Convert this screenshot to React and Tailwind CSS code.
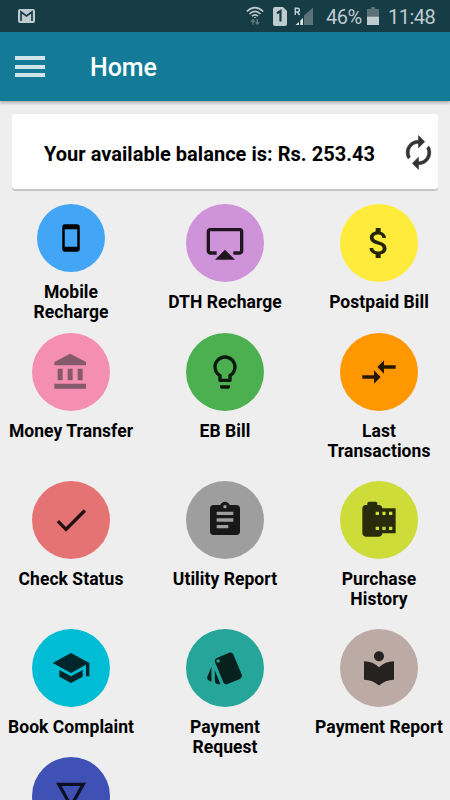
import {
  MdStayPrimaryPortrait,
  MdAirplay,
  MdAttachMoney,
  MdCompareArrows,
  MdCheck,
  MdAssignment,
  MdCameraRoll,
  MdSchool,
  MdLocalLibrary,
} from "react-icons/md";

function BankIcon({ className }) {
  return (
    <svg className={className} viewBox="0 0 24 24" fill="currentColor">
      <path d="M4 10v7h3v-7H4zm6 0v7h3v-7h-3zM2 22h19v-3H2v3zm14-12v7h3v-7h-3zm-4.5-9L2 6v2h19V6l-9.5-5z" />
    </svg>
  );
}

function BulbIcon({ className }) {
  return (
    <svg className={className} viewBox="0 0 24 24" fill="currentColor">
      <path d="M9 21c0 .55.45 1 1 1h4c.55 0 1-.45 1-1v-1H9v1zm3-19C8.14 2 5 5.14 5 9c0 2.38 1.19 4.47 3 5.74V17c0 .55.45 1 1 1h6c.55 0 1-.45 1-1v-2.26c1.81-1.27 3-3.36 3-5.74 0-3.86-3.14-7-7-7zm2.85 11.1l-.85.6V16h-4v-2.3l-.85-.6C7.8 12.16 7 10.63 7 9c0-2.76 2.24-5 5-5s5 2.24 5 5c0 1.63-.8 3.16-2.15 4.1z" />
    </svg>
  );
}

function CardsIcon({ className }) {
  return (
    <svg className={className} viewBox="0 0 24 24" fill="currentColor">
      <path d="M2.53 19.65l1.34.56v-9.03l-2.43 5.86c-.41 1.02.08 2.19 1.09 2.61zm19.5-3.7L17.07 3.98c-.31-.75-1.04-1.21-1.81-1.23-.26 0-.53.04-.79.15L7.1 5.95c-.75.31-1.21 1.03-1.23 1.8-.01.27.04.54.15.8l4.96 11.97c.31.76 1.05 1.22 1.83 1.23.26 0 .52-.05.77-.15l7.36-3.05c1.02-.42 1.51-1.59 1.09-2.6zM7.88 8.75c-.55 0-1-.45-1-1s.45-1 1-1 1 .45 1 1-.45 1-1 1zm-2 11c0 1.1.9 2 2 2h1.45l-3.45-8.34v6.34z" />
    </svg>
  );
}

function TriangleIcon({ className }) {
  return (
    <svg className={className} viewBox="0 0 24 24" fill="currentColor">
      <path d="M3 4l9 16 9-16H3zm3.38 2h11.25L12 16 6.38 6z" />
    </svg>
  );
}

function RefreshIcon({ className }) {
  return (
    <svg className={className} viewBox="0 0 24 24" fill="currentColor" stroke="currentColor" strokeWidth="0.35">
      <path d="M12 6v3l4-4-4-4v3c-4.42 0-8 3.58-8 8 0 1.57.46 3.03 1.24 4.26L6.7 14.8c-.45-.83-.7-1.79-.7-2.8 0-3.31 2.69-6 6-6zm6.76 1.74L17.3 9.2c.44.84.7 1.79.7 2.8 0 3.31-2.69 6-6 6v-3l-4 4 4 4v-3c4.42 0 8-3.58 8-8 0-1.57-.46-3.03-1.24-4.26z" />
    </svg>
  );
}

const services = [
  { label: ["Mobile", "Recharge"], Icon: MdStayPrimaryPortrait, circle: "size-[68px] bg-[#42a5f5]", icon: "size-[30px] text-black" },
  { label: ["DTH Recharge"], Icon: MdAirplay, circle: "size-[78px] bg-[#ce93d8]", icon: "size-[40px] text-black/85" },
  { label: ["Postpaid Bill"], Icon: MdAttachMoney, circle: "size-[78px] bg-[#ffeb3b]", icon: "size-[40px] text-black/85" },
  { label: ["Money Transfer"], Icon: BankIcon, circle: "size-[78px] bg-[#f48fb1]", icon: "size-[40px] text-[#855a6a]" },
  { label: ["EB Bill"], Icon: BulbIcon, circle: "size-[78px] bg-[#4caf50]", icon: "size-[40px] text-black/85" },
  { label: ["Last", "Transactions"], Icon: MdCompareArrows, circle: "size-[78px] bg-[#ff9800]", icon: "size-[40px] text-black/85" },
  { label: ["Check Status"], Icon: MdCheck, circle: "size-[78px] bg-[#e57373]", icon: "size-[40px] text-black/85" },
  { label: ["Utility Report"], Icon: MdAssignment, circle: "size-[78px] bg-[#9e9e9e]", icon: "size-[40px] text-black/85" },
  { label: ["Purchase", "History"], Icon: MdCameraRoll, circle: "size-[78px] bg-[#cddc39]", icon: "size-[40px] text-black/80" },
  { label: ["Book Complaint"], Icon: MdSchool, circle: "size-[78px] bg-[#00bcd4]", icon: "size-[40px] text-black/80" },
  { label: ["Payment", "Request"], Icon: CardsIcon, circle: "size-[78px] bg-[#26a69a]", icon: "size-[40px] text-black/80" },
  { label: ["Payment Report"], Icon: MdLocalLibrary, circle: "size-[78px] bg-[#bcaaa4]", icon: "size-[40px] text-black/80" },
  { label: [], Icon: TriangleIcon, circle: "size-[78px] bg-[#3f51b5]", icon: "size-[40px] text-black/80" },
];

function StatusBar() {
  return (
    <div className="flex h-8 shrink-0 items-center bg-[#163c46] pr-[14px] pl-[18px] text-[#bfcbce]">
      <svg className="h-[14px] w-[17px]" viewBox="0 0 17 14">
        <rect width="17" height="14" rx="2" fill="#bfcbce" />
        <path d="M3 12V3l5.5 4L14 3v9" fill="none" stroke="#163c46" strokeWidth="1.7" />
      </svg>
      <svg className="ml-auto h-5 w-[18px]" viewBox="0 0 18 20" fill="none" stroke="#bfcbce" strokeWidth="1.6">
        <path d="M.8 5.5Q9-2.2 17.2 5.5" />
        <path d="M3.5 8Q9 2.8 14.5 8" />
        <path d="M6 10.2Q9 7.4 12 10.2" />
        <circle cx="9" cy="11.5" r=".8" fill="#bfcbce" stroke="none" />
        <path d="M7 18.5v-5M5 15.7l2-2 2 2M11.3 13v5M9.7 16.2l1.6 1.8 2-1.8" stroke="#62787e" strokeWidth="1.4" />
      </svg>
      <svg className="ml-[9px] h-[19px] w-[14px]" viewBox="0 0 14 19">
        <path d="M2 0h8l4 4v13a2 2 0 0 1-2 2H2a2 2 0 0 1-2-2V2a2 2 0 0 1 2-2z" fill="#bfcbce" />
        <path d="M4 6.2 7.5 4v10.5" fill="none" stroke="#163c46" strokeWidth="2.2" />
      </svg>
      <svg className="ml-[7px] h-[19px] w-5" viewBox="0 0 20 19">
        <path d="M19 .5V18H10V8.5z" fill="#5b7278" />
        <path d="M9 11V18H6.3v-4.5zM5 15v3H1.5z" fill="#dce3e5" />
        <path d="M1.3 8V1.2H3.5a1.7 1.7 0 0 1 0 3.7H1.3M3.6 5l2 3" fill="none" stroke="#bfcbce" strokeWidth="1.5" />
      </svg>
      <span className="ml-[12px] w-[38px] pt-px text-[20px] leading-8 tracking-[-0.5px] whitespace-nowrap">46%</span>
      <svg className="ml-[3px] h-[18px] w-[12px]" viewBox="0 0 12 18">
        <path d="M4 0h4v2h4v7.5H0V2h4z" fill="#5b7278" />
        <path d="M0 9.5h12V18H0z" fill="#bfcbce" />
      </svg>
      <span className="ml-[9px] w-[48px] pt-px text-[20px] leading-8 tracking-[-0.5px] whitespace-nowrap">11:48</span>
    </div>
  );
}

function AppBar() {
  return (
    <header className="z-10 flex h-[69px] shrink-0 items-center bg-[#137b98] pl-[15px] shadow-[0_2px_3px_rgba(0,0,0,0.28)]">
      <div className="flex w-[30px] flex-col gap-[4.5px]">
        <div className="h-[4px] bg-[#d0e5ea]" />
        <div className="h-[4px] bg-[#d0e5ea]" />
        <div className="h-[4px] bg-[#d0e5ea]" />
      </div>
      <h1 className="ml-[45px] pt-[2px] text-[25px] leading-8 font-medium tracking-[-0.1px] text-white">Home</h1>
    </header>
  );
}

function BalanceCard() {
  return (
    <section className="mx-3 mt-[13px] flex h-[75px] shrink-0 items-center rounded-[3px] bg-white pl-8 shadow-[0_2px_0_#c6c6c6]">
      <p className="pt-[4px] text-[20px] leading-6 font-bold tracking-[0.03px] whitespace-nowrap text-black">Your available balance is: Rs. 253.43</p>
      <RefreshIcon className="mt-[2px] mr-px ml-auto size-[37px] text-[#333]" />
    </section>
  );
}

function Service({ label, Icon, circle, icon }) {
  return (
    <div className="flex flex-col items-center">
      <div className={`flex shrink-0 items-center justify-center rounded-full ${circle}`}>
        <Icon className={icon} />
      </div>
      <div className="mt-[10px] text-center text-[17.5px] leading-5 font-bold tracking-[0.05px] text-black">
        {label.map((line) => (
          <div key={line} className="whitespace-nowrap">{line}</div>
        ))}
      </div>
    </div>
  );
}

export default function App() {
  return (
    <div className="flex h-[800px] w-[450px] flex-col overflow-hidden bg-[#eeeeee] font-['Roboto',sans-serif]">
      <StatusBar />
      <AppBar />
      <BalanceCard />
      <main className="mt-[15px] grid grid-cols-3 grid-rows-[129px_148px_148px_128px_78px] gap-x-3">
        {services.map((s, i) => (
          <Service key={i} {...s} />
        ))}
      </main>
    </div>
  );
}
